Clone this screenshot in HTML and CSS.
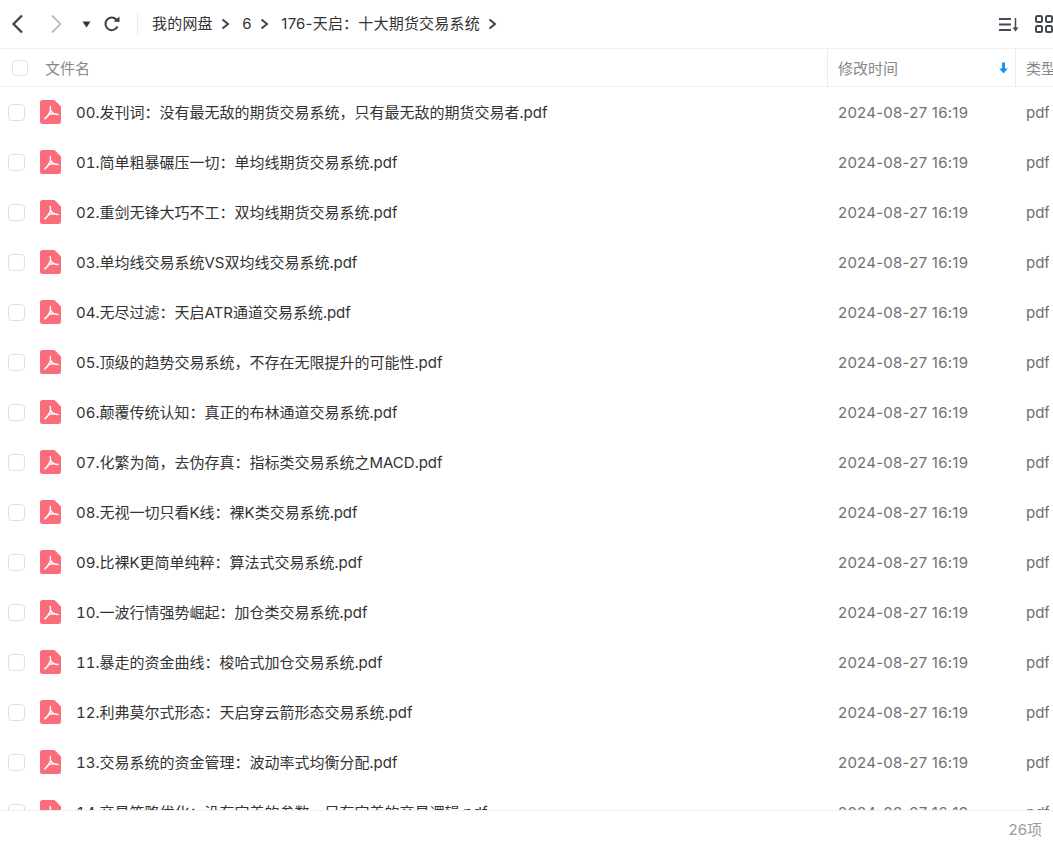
FILE: index.html
```html
<!DOCTYPE html>
<html lang="en">
<head>
  <meta charset="UTF-8"/>
  <title>176-天启：十大期货交易系统</title>
  <link rel="stylesheet" href="styles.css">
</head>
<body>

<svg class="defs" width="0" height="0">
  <symbol id="pdf" viewBox="0 0 21 24">
    <path d="M2.500 0H14.500L21 6.500V21.500A2.500 2.500 0 0 1 18.500 24H2.500A2.500 2.500 0 0 1 0 21.500V2.500A2.500 2.500 0 0 1 2.500 0Z" fill="#fc6d7b"/>
    <path d="M10.300 6.500C10 9.500 11.500 12.800 14 13.800C15.500 14.400 17 14.400 18 14.400M10.600 10.500C9.500 14 7.500 16.800 4.800 18.800M7.800 15.200C10 14 12.500 13.500 15 13.900" fill="none" stroke="#fff" stroke-width="1.500" stroke-linecap="round"/>
  </symbol>
  <symbol id="chev" viewBox="0 0 9 12">
    <path d="M1.500 1.500L7 6L1.500 10.500" fill="none" stroke="currentColor" stroke-width="2"/>
  </symbol>
</svg>

<div class="app">
  <div class="toolbar">
    <div class="nav">
      <svg class="back" width="13" height="20" viewBox="0 0 13 20"><path d="M11 1.500L2.500 10L11 18.500" fill="none" stroke="currentColor" stroke-width="2.200"/></svg>
      <svg class="forward" width="13" height="20" viewBox="0 0 13 20"><path d="M2 1.500L10.500 10L2 18.500" fill="none" stroke="currentColor" stroke-width="1.800"/></svg>
      <svg class="history" width="9" height="7" viewBox="0 0 9 7"><path d="M0.500 0.500H8.500L4.500 6.500Z" fill="currentColor"/></svg>
      <svg class="reload" width="16" height="16" viewBox="0 0 16 16"><path d="M13.500 10.500A6.300 6.300 0 1 1 12.300 3.500" fill="none" stroke="currentColor" stroke-width="2"/><path d="M9.500 5.500L15.500 6V0.500Z" fill="currentColor"/></svg>
    </div>
    <div class="crumbs">
      <span>我的网盘</span>
      <svg class="sep" width="9" height="12"><use href="#chev"/></svg>
      <span>6</span>
      <svg class="sep" width="9" height="12"><use href="#chev"/></svg>
      <span>176-天启：十大期货交易系统</span>
      <svg class="sep" width="9" height="12"><use href="#chev"/></svg>
    </div>
    <div class="tools">
      <svg width="21" height="15" viewBox="0 0 21 15"><path d="M0 2H12M0 7.500H12M0 13H12" stroke="currentColor" stroke-width="2"/><path d="M16.500 1V13" stroke="currentColor" stroke-width="1.500"/><path d="M13.500 10.500H19.500L16.500 14.500Z" fill="currentColor"/></svg>
      <svg width="18" height="18" viewBox="0 0 18 18"><g fill="none" stroke="currentColor" stroke-width="2"><rect x="1" y="1" width="6" height="6" rx="1.500"/><rect x="11" y="1" width="6" height="6" rx="1.500"/><rect x="1" y="11" width="6" height="6" rx="1.500"/><rect x="11" y="11" width="6" height="6" rx="1.500"/></g></svg>
    </div>
  </div>

  <div class="head">
    <div class="head-name"><span class="check check-all"></span><span>文件名</span></div>
    <div class="head-time"><span>修改时间</span>
      <svg width="9" height="12" viewBox="0 0 9 12"><path d="M3 0.500H6V6.500H8.800L4.500 11.500L0.200 6.500H3Z" fill="#1a93f5"/></svg>
    </div>
    <div class="head-type"><span>类型</span></div>
  </div>

  <div class="list">
    <div class="row"><span class="check"></span><svg class="file-icon"><use href="#pdf"/></svg><div class="name">00.发刊词：没有最无敌的期货交易系统，只有最无敌的期货交易者.pdf</div><div class="time">2024-08-27 16:19</div><div class="type">pdf</div></div>
    <div class="row"><span class="check"></span><svg class="file-icon"><use href="#pdf"/></svg><div class="name">01.简单粗暴碾压一切：单均线期货交易系统.pdf</div><div class="time">2024-08-27 16:19</div><div class="type">pdf</div></div>
    <div class="row"><span class="check"></span><svg class="file-icon"><use href="#pdf"/></svg><div class="name">02.重剑无锋大巧不工：双均线期货交易系统.pdf</div><div class="time">2024-08-27 16:19</div><div class="type">pdf</div></div>
    <div class="row"><span class="check"></span><svg class="file-icon"><use href="#pdf"/></svg><div class="name">03.单均线交易系统VS双均线交易系统.pdf</div><div class="time">2024-08-27 16:19</div><div class="type">pdf</div></div>
    <div class="row"><span class="check"></span><svg class="file-icon"><use href="#pdf"/></svg><div class="name">04.无尽过滤：天启ATR通道交易系统.pdf</div><div class="time">2024-08-27 16:19</div><div class="type">pdf</div></div>
    <div class="row"><span class="check"></span><svg class="file-icon"><use href="#pdf"/></svg><div class="name">05.顶级的趋势交易系统，不存在无限提升的可能性.pdf</div><div class="time">2024-08-27 16:19</div><div class="type">pdf</div></div>
    <div class="row"><span class="check"></span><svg class="file-icon"><use href="#pdf"/></svg><div class="name">06.颠覆传统认知：真正的布林通道交易系统.pdf</div><div class="time">2024-08-27 16:19</div><div class="type">pdf</div></div>
    <div class="row"><span class="check"></span><svg class="file-icon"><use href="#pdf"/></svg><div class="name">07.化繁为简，去伪存真：指标类交易系统之MACD.pdf</div><div class="time">2024-08-27 16:19</div><div class="type">pdf</div></div>
    <div class="row"><span class="check"></span><svg class="file-icon"><use href="#pdf"/></svg><div class="name">08.无视一切只看K线：裸K类交易系统.pdf</div><div class="time">2024-08-27 16:19</div><div class="type">pdf</div></div>
    <div class="row"><span class="check"></span><svg class="file-icon"><use href="#pdf"/></svg><div class="name">09.比裸K更简单纯粹：算法式交易系统.pdf</div><div class="time">2024-08-27 16:19</div><div class="type">pdf</div></div>
    <div class="row"><span class="check"></span><svg class="file-icon"><use href="#pdf"/></svg><div class="name">10.一波行情强势崛起：加仓类交易系统.pdf</div><div class="time">2024-08-27 16:19</div><div class="type">pdf</div></div>
    <div class="row"><span class="check"></span><svg class="file-icon"><use href="#pdf"/></svg><div class="name">11.暴走的资金曲线：梭哈式加仓交易系统.pdf</div><div class="time">2024-08-27 16:19</div><div class="type">pdf</div></div>
    <div class="row"><span class="check"></span><svg class="file-icon"><use href="#pdf"/></svg><div class="name">12.利弗莫尔式形态：天启穿云箭形态交易系统.pdf</div><div class="time">2024-08-27 16:19</div><div class="type">pdf</div></div>
    <div class="row"><span class="check"></span><svg class="file-icon"><use href="#pdf"/></svg><div class="name">13.交易系统的资金管理：波动率式均衡分配.pdf</div><div class="time">2024-08-27 16:19</div><div class="type">pdf</div></div>
    <div class="row"><span class="check"></span><svg class="file-icon"><use href="#pdf"/></svg><div class="name">14.交易策略优化：没有完美的参数，只有完美的交易逻辑.pdf</div><div class="time">2024-08-27 16:19</div><div class="type">pdf</div></div>
  </div>

  <div class="footer">26项</div>
</div>

</body>
</html>
```
FILE: styles.css
```css
body {
  margin: 0;
  font-family: Inter, "Noto Sans CJK SC", sans-serif;
  font-size: 15px;
  color: #333;
  background: #fff;
}

.defs {
  display: block;
  height: 0;
}

.app {
  display: flex;
  flex-direction: column;
  height: 100vh;
  overflow: hidden;
}

.toolbar {
  flex: none;
  display: flex;
  align-items: center;
  height: 48px;
  border-bottom: 1px solid #f0f0f2;
}

.nav {
  display: flex;
  align-items: center;
  width: 138px;
  height: 24px;
  padding-left: 11px;
  box-sizing: border-box;
  border-right: 1px solid #ececee;
}

.back {
  color: #3a3f47;
}

.forward {
  margin-left: 26px;
  color: #bcbec2;
}

.history {
  margin-left: 19px;
  color: #30343a;
}

.reload {
  margin-left: 13px;
  color: #3a3f47;
}

.crumbs {
  display: flex;
  align-items: center;
  margin-left: 14px;
  line-height: 22px;
  letter-spacing: 0.2px;
}

.sep {
  margin: 0 12.5px 0 8px;
  color: #3f434a;
}

.tools {
  margin-left: auto;
  display: flex;
  align-items: center;
  gap: 15px;
  color: #454a54;
}

.head {
  flex: none;
  display: flex;
  height: 37px;
  border-bottom: 1px solid #f0f0f2;
  color: #85888d;
}

.head > div {
  display: flex;
  align-items: center;
  box-sizing: border-box;
  border-right: 1px solid #ececee;
}

.head-name {
  width: 828px;
  padding-left: 12px;
}

.head-time {
  width: 188px;
  padding: 0 7px 0 10px;
  justify-content: space-between;
}

.head .head-type {
  flex: 1;
  padding-left: 10px;
  border-right: none;
  white-space: nowrap;
  overflow: hidden;
}

.check {
  flex: none;
  box-sizing: border-box;
  width: 17px;
  height: 17px;
  margin-left: 8px;
  border: 1px solid #d9e2ec;
  border-radius: 4px;
}

.check-all {
  width: 16px;
  height: 16px;
  margin: 0 17px 0 0;
  border-color: #e3e4e7;
}

.list {
  flex: 1;
  overflow: hidden;
}

.row {
  display: flex;
  align-items: center;
  height: 50px;
}

.file-icon {
  flex: none;
  width: 21px;
  height: 24px;
  margin: 0 15px;
}

.name {
  width: 752px;
  flex: none;
  margin-bottom: 2px;
  white-space: nowrap;
  font-variant-numeric: tabular-nums;
}

.time {
  width: 188px;
  flex: none;
  padding-left: 10px;
  box-sizing: border-box;
  white-space: nowrap;
  letter-spacing: 0.25px;
  color: #6d7075;
}

.type {
  flex: none;
  box-sizing: border-box;
  width: 33px;
  padding-left: 10px;
  overflow: hidden;
  color: #6d7075;
}

.footer {
  flex: none;
  height: 33px;
  line-height: 38px;
  border-top: 1px solid #f0f0f2;
  padding-right: 11px;
  text-align: right;
  color: #9a9ca0;
}
```
